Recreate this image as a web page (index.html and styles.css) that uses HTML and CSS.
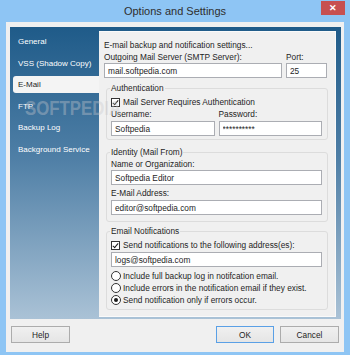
FILE: index.html
```html
<!DOCTYPE html>
<html lang="en">

<head>
    <meta charset="UTF-8">
    <title>Options and Settings</title>
    <link rel="stylesheet" href="styles.css">
</head>

<body>
    <div class="window">
        <div class="titlebar">
            <span class="title">Options and Settings</span>
            <span class="close">✕</span>
        </div>

        <div class="frame">
            <div class="panel">
                <ul class="nav">
                    <li>General</li>
                    <li>VSS (Shadow Copy)</li>
                    <li class="active">E-Mail</li>
                    <li>FTP</li>
                    <li>Backup Log</li>
                    <li>Background Service</li>
                </ul>

                <div class="content">
                    <p class="intro">E-mail backup and notification settings...</p>

                    <div class="row">
                        <div class="field server">
                            <label>Outgoing Mail Server (SMTP Server):</label>
                            <input type="text" value="mail.softpedia.com">
                        </div>
                        <div class="field port">
                            <label>Port:</label>
                            <input type="text" value="25">
                        </div>
                    </div>

                    <fieldset class="auth">
                        <legend>Authentication</legend>
                        <div class="check"><span class="box checked"></span>Mail Server Requires Authentication</div>
                        <div class="row">
                            <div class="field half">
                                <label>Username:</label>
                                <input type="text" value="Softpedia">
                            </div>
                            <div class="field half">
                                <label>Password:</label>
                                <input type="text" value="**********">
                            </div>
                        </div>
                    </fieldset>

                    <fieldset class="identity">
                        <legend>Identity (Mail From)</legend>
                        <label>Name or Organization:</label>
                        <input type="text" value="Softpedia Editor">
                        <label class="spaced">E-Mail Address:</label>
                        <input type="text" value="editor@softpedia.com">
                    </fieldset>

                    <fieldset class="notify">
                        <legend>Email Notifications</legend>
                        <div class="check"><span class="box checked"></span>Send notifications to the following address(es):</div>
                        <input type="text" value="logs@softpedia.com">
                        <div class="radios">
                            <div class="check"><span class="radio"></span>Include full backup log in notifcation email.</div>
                            <div class="check"><span class="radio"></span>Include errors in the notification email if they exist.</div>
                            <div class="check"><span class="radio on"></span>Send notification only if errors occur.</div>
                        </div>
                    </fieldset>
                </div>
            </div>

            <div class="buttons">
                <button>Help</button>
                <span class="spacer"></span>
                <button class="default">OK</button>
                <button>Cancel</button>
            </div>
        </div>

        <div class="watermark">SOFTPEDIA</div>
    </div>
</body>

</html>
```

FILE: styles.css
```css
body {
    margin: 0;
    font-family: "Liberation Sans", Arial, sans-serif;
    font-size: 8.3px;
    color: #1e1e1e;
}

.window {
    position: relative;
    width: 350px;
    height: 355px;
    background-color: #8ec5f4;
    overflow: hidden;
}

.titlebar {
    height: 22px;
    display: flex;
    justify-content: center;
    align-items: center;
}

.title {
    font-size: 11px;
    color: #2e2e2e;
}

.close {
    position: absolute;
    top: 1px;
    left: 321px;
    width: 24px;
    height: 14px;
    background-color: #c75050;
    color: #ffffff;
    font-size: 9px;
    font-weight: bold;
    line-height: 14px;
    text-align: center;
}

.frame {
    margin: 0 6px 3px 6px;
    height: 330px;
    background-color: #f0f0f0;
    display: flex;
    flex-direction: column;
}

.panel {
    margin: 5px 3px 0 4px;
    height: 292px;
    display: flex;
    background: linear-gradient(#1f5b89, #4f7fa6 45%, #aac2d6);
}

.nav {
    list-style: none;
    margin: 0;
    padding: 6px 0 0 0;
    width: 90px;
    display: flex;
    flex-direction: column;
    gap: 4.5px;
}

.nav li {
    height: 17px;
    line-height: 17px;
    margin-left: 3px;
    padding-left: 5px;
    color: #ffffff;
    white-space: nowrap;
    font-size: 8px;
}

.nav li.active {
    background-color: #f4f4f4;
    color: #1e1e1e;
    border-radius: 3px 0 0 3px;
}

.content {
    flex: 1;
    margin: 4px 5px 2px 0;
    padding: 7px 8px 0 5px;
    background-color: #f0f0f0;
    border: 1px solid #fafafa;
    border-left: none;
    box-sizing: border-box;
}

.intro {
    margin: 0;
    line-height: 12px;
}

label {
    display: block;
    line-height: 11px;
}

input {
    display: block;
    width: 100%;
    height: 15px;
    box-sizing: border-box;
    margin: 0;
    padding: 0 3px;
    border: 1px solid #abadb3;
    background-color: #ffffff;
    font-family: "Liberation Sans", Arial, sans-serif;
    font-size: 8.3px;
    color: #1e1e1e;
}

.row {
    display: flex;
    gap: 4px;
}

.server {
    width: 178px;
}

.port {
    width: 41px;
}

.content > .row label {
    padding-top: 1px;
}

.half {
    flex: 1;
}

fieldset {
    margin: 0 -1px 0 2px;
    padding: 0 5px 3px 4px;
    min-width: 0;
    border: 1px solid #dcdcdc;
    border-radius: 3px;
}

legend {
    padding: 0 1px;
    margin-left: -1px;
    line-height: 12px;
}

.auth {
    margin-top: 4px;
}

.auth .check {
    margin-top: 2px;
}

.auth .row {
    margin-top: 1px;
}

.auth label {
    margin-bottom: 1px;
}

.identity {
    margin-top: 6px;
    padding-bottom: 6px;
}

.identity label {
    margin: 1px 0 0 0;
}

.identity label.spaced {
    margin: 3px 0 1px 0;
}

.notify {
    margin-top: 3px;
}

.notify .check {
    margin-top: 2px;
}

.notify input {
    margin-top: 1px;
}

.radios {
    margin-top: 3px;
}

.radios .check {
    margin-top: 0;
}

.check {
    display: flex;
    align-items: center;
    line-height: 12px;
    white-space: nowrap;
}

.box {
    width: 9px;
    height: 9px;
    box-sizing: border-box;
    border: 1px solid #333333;
    background-color: #ffffff;
    margin-right: 3px;
    position: relative;
}

.box.checked::after {
    content: "";
    position: absolute;
    left: 2px;
    top: 0;
    width: 2px;
    height: 5px;
    border: solid #1a1a1a;
    border-width: 0 1.5px 1.5px 0;
    transform: rotate(40deg);
}

.radio {
    width: 10px;
    height: 10px;
    box-sizing: border-box;
    border: 1px solid #333333;
    border-radius: 50%;
    background-color: #ffffff;
    margin-right: 2px;
    display: flex;
    justify-content: center;
    align-items: center;
}

.radio.on::after {
    content: "";
    width: 4px;
    height: 4px;
    border-radius: 50%;
    background-color: #1a1a1a;
}

.buttons {
    display: flex;
    gap: 6px;
    padding: 7px 5px 0 5px;
}

.spacer {
    flex: 1;
}

button {
    width: 59px;
    height: 17px;
    padding: 0;
    border: 1px solid #acacac;
    background: linear-gradient(#f0f0f0, #e5e5e5);
    font-family: "Liberation Sans", Arial, sans-serif;
    font-size: 8.3px;
    color: #1e1e1e;
}

button.default {
    width: 58px;
    border-color: #5aa0e6;
}

.watermark {
    position: absolute;
    left: 25px;
    top: 96px;
    font-size: 21px;
    font-weight: bold;
    line-height: 24px;
    color: rgba(200, 200, 205, 0.4);
    transform: scaleX(0.8);
    transform-origin: left center;
    pointer-events: none;
}
```
